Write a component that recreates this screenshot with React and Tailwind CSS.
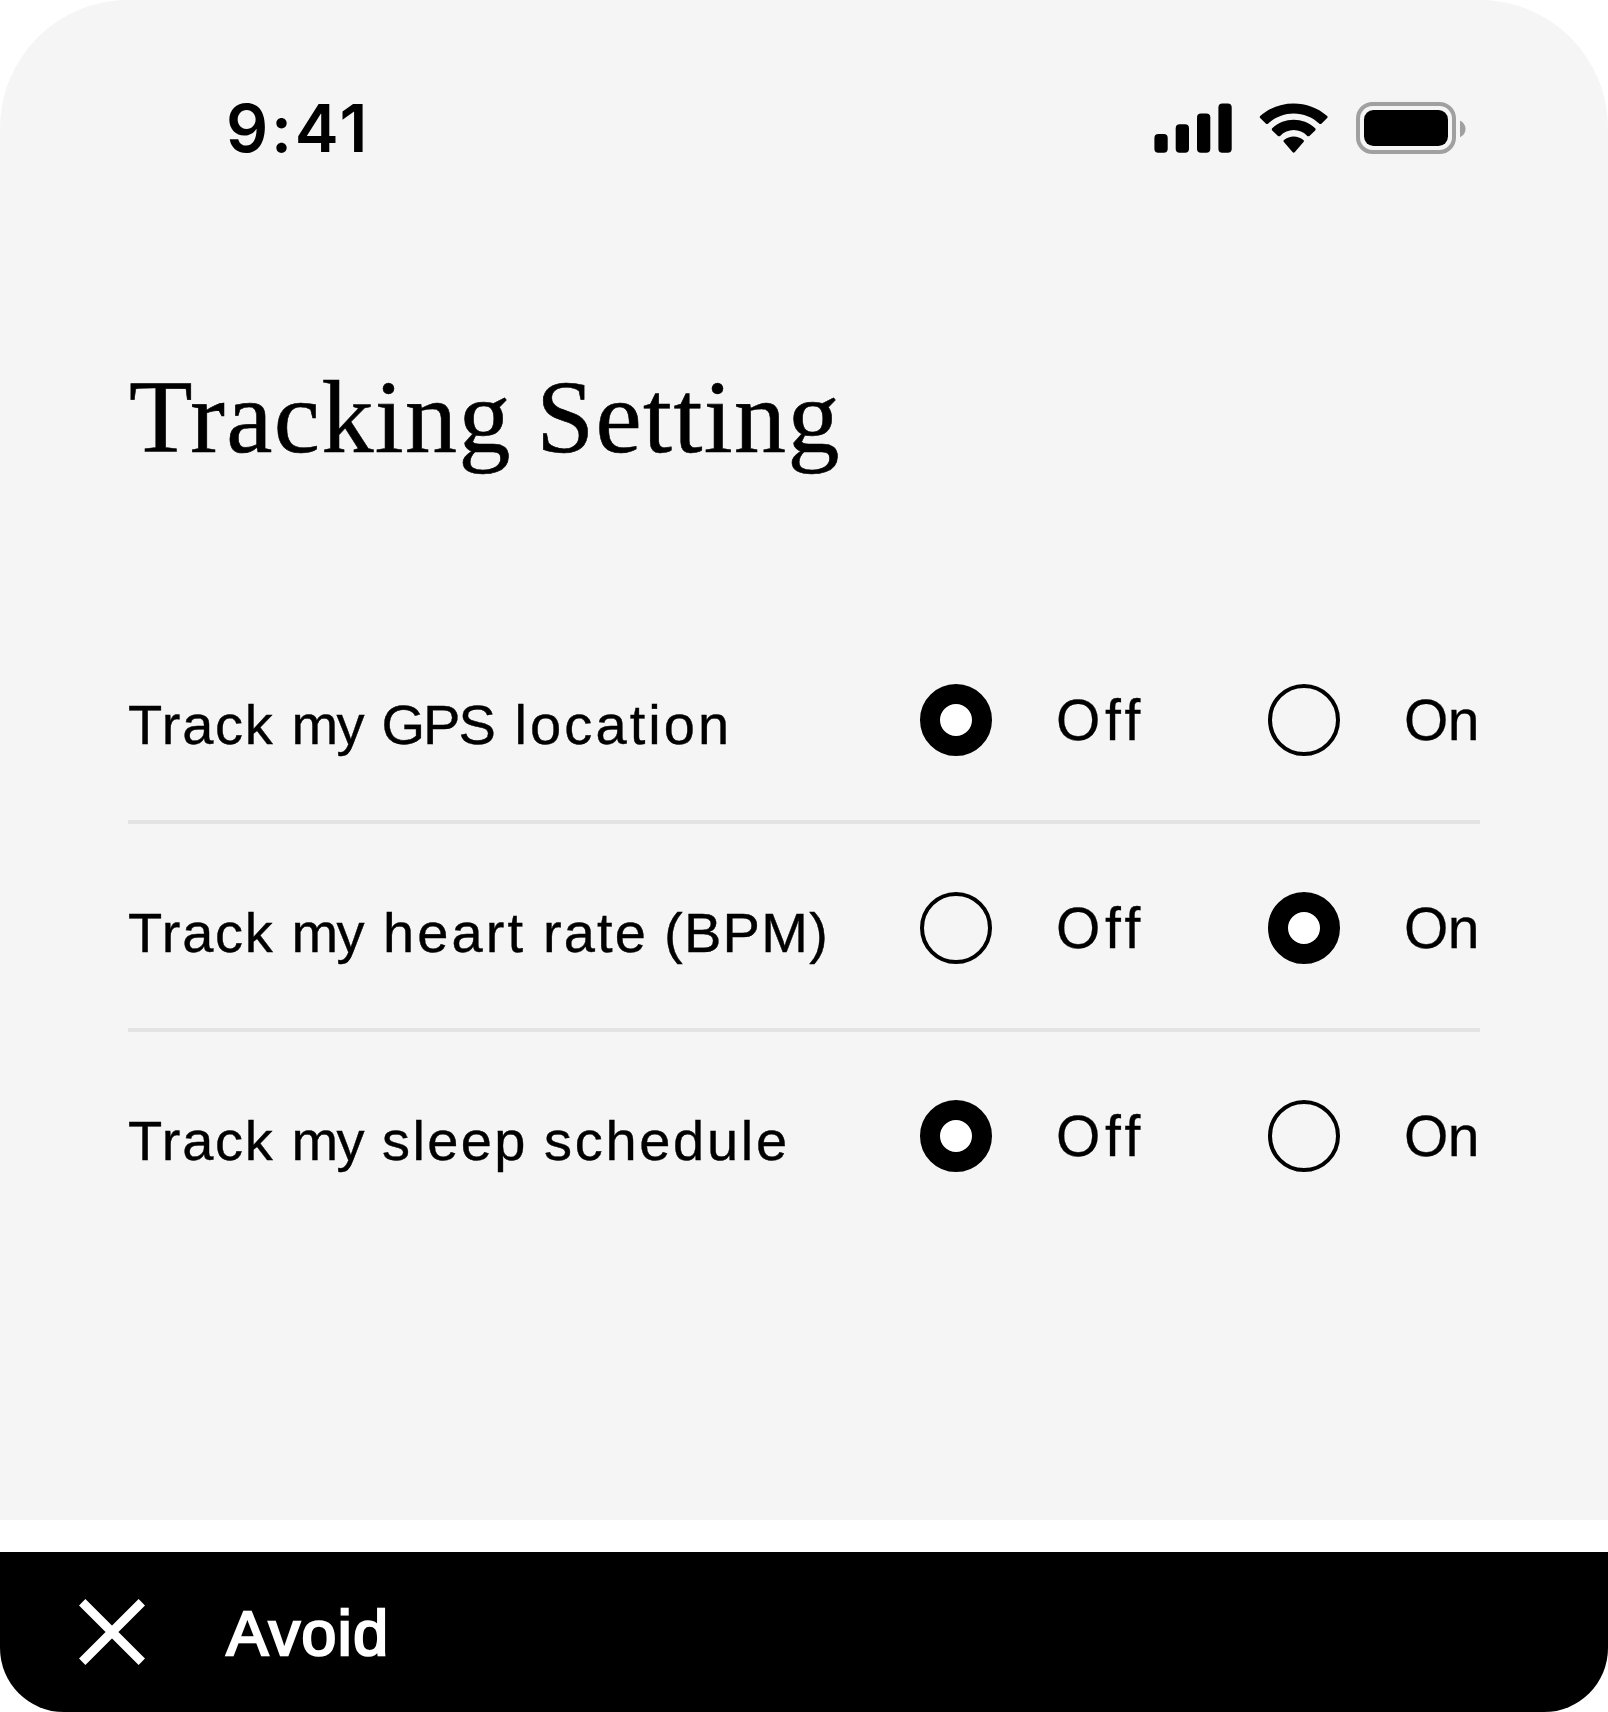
import React, { useState } from "react";

const initialSettings = [
  {
    id: "gps",
    words: [
      ["Track ", "w-[163.5px] tracking-[1.7px]"],
      ["my ", "w-[90px] tracking-[-1.6px]"],
      ["GPS ", "w-[133px] tracking-[-2px]"],
      ["location", "tracking-[3.1px]"],
    ],
    value: "Off",
  },
  {
    id: "heart",
    words: [
      ["Track ", "w-[163.5px] tracking-[1.7px]"],
      ["my ", "w-[91.5px] tracking-[-1.6px]"],
      ["heart ", "w-[160px] tracking-[3.1px]"],
      ["rate ", "w-[121px] tracking-[2.1px]"],
      ["(BPM)", "tracking-[1.3px]"],
    ],
    value: "On",
  },
  {
    id: "sleep",
    words: [
      ["Track ", "w-[163.5px] tracking-[1.7px]"],
      ["my ", "w-[90.5px] tracking-[-1.6px]"],
      ["sleep ", "w-[162px] tracking-[2.4px]"],
      ["schedule", "tracking-[2.7px]"],
    ],
    value: "Off",
  },
];

const options = [
  { label: "Off", className: "tracking-[4.7px]" },
  { label: "On", className: "tracking-[-0.5px]" },
];

function SignalIcon() {
  return (
    <svg width="78" height="50" viewBox="0 0 78 50" fill="black" aria-hidden="true">
      <rect x="0.4" y="31" width="13.3" height="18.8" rx="4" />
      <rect x="21.7" y="21.3" width="13.3" height="28.5" rx="4" />
      <rect x="43" y="10.5" width="13.3" height="39.3" rx="4" />
      <rect x="64.4" y="0.6" width="13.3" height="49.2" rx="4" />
    </svg>
  );
}

function WifiIcon() {
  return (
    <svg width="70" height="50" viewBox="0 0 70 50" fill="black" aria-hidden="true">
      <path d="M34.7 10.5C44.3 10.5 53.4 14.2 60.4 20.7C61 21.2 61.9 21.2 62.4 20.7L68.2 15.1C68.8 14.5 68.8 13.7 68.2 13.1C49.6 -3.7 19.8 -3.7 1.2 13.1C0.6 13.7 0.6 14.5 1.2 15.1L7 20.7C7.5 21.2 8.4 21.2 9 20.7C16 14.2 25.1 10.5 34.7 10.5Z" />
      <path d="M34.7 27C39.7 27 44.6 29.1 48.3 32.9C48.9 33.5 49.8 33.5 50.4 32.9L56.2 27.4C56.8 26.8 56.8 25.9 56.2 25.3C44 14 25.4 14 13.2 25.3C12.6 25.9 12.6 26.8 13.2 27.4L19 32.9C19.6 33.5 20.5 33.5 21.1 32.9C24.8 29.1 29.7 27 34.7 27Z" />
      <path d="M44.5 39.1C45.1 38.5 45.1 37.6 44.4 37C38.9 32.2 30.5 32.2 25 37C24.3 37.6 24.3 38.5 24.9 39.1L33.7 49.3C34.3 49.9 35.1 49.9 35.7 49.3Z" />
    </svg>
  );
}

function BatteryIcon() {
  return (
    <svg width="110" height="52" viewBox="0 0 110 52" aria-hidden="true">
      <rect x="2" y="2" width="96" height="48" rx="14.5" fill="none" stroke="#a0a0a0" strokeWidth="4" />
      <rect x="8" y="8" width="84" height="36" rx="9.5" fill="black" />
      <path d="M104 18.8V35.2C107.3 33.8 109.5 30.6 109.5 27C109.5 23.4 107.3 20.2 104 18.8Z" fill="#a0a0a0" />
    </svg>
  );
}

function CloseIcon() {
  return (
    <svg width="66" height="66" viewBox="0 0 66 66" stroke="white" strokeWidth="9" aria-hidden="true">
      <path d="M3.2 3.2L62.8 62.8M62.8 3.2L3.2 62.8" />
    </svg>
  );
}

function RadioOption({ name, option, checked, onSelect }) {
  return (
    <label className="flex h-[72px] cursor-pointer items-center gap-16">
      <input
        type="radio"
        name={name}
        checked={checked}
        onChange={onSelect}
        className="size-[72px] shrink-0 appearance-none rounded-full border-4 border-black checked:border-20 checked:bg-white"
      />
      <span className={`text-[57px] leading-[72px] [-webkit-text-stroke:0.3px_black] ${option.className}`}>
        {option.label}
      </span>
    </label>
  );
}

function SettingRow({ setting, onChange }) {
  return (
    <div className="grid h-52 grid-cols-[792px_348px_212px] items-start border-b-4 border-[#e3e3e3] pt-[68px] last:border-b-0">
      <span className="pt-[5px] text-[56px] leading-[72px] whitespace-pre [-webkit-text-stroke:0.4px_black]">
        {setting.words.map(([word, className]) => (
          <span key={word} className={`inline-block ${className}`}>
            {word}
          </span>
        ))}
      </span>
      {options.map((option) => (
        <RadioOption
          key={option.label}
          name={setting.id}
          option={option}
          checked={setting.value === option.label}
          onSelect={() => onChange(setting.id, option.label)}
        />
      ))}
    </div>
  );
}

export default function App() {
  const [settings, setSettings] = useState(initialSettings);
  const update = (id, value) =>
    setSettings((list) => list.map((s) => (s.id === id ? { ...s, value } : s)));

  return (
    <div className="flex h-[1712px] w-[1608px] flex-col gap-8 overflow-hidden bg-white font-['Liberation_Sans',sans-serif] text-black">
      <main className="h-[1520px] rounded-t-[128px] bg-[#f5f5f5]">
        <header className="flex h-64 items-start justify-between pt-[102px] pr-[142px] pl-[226px]">
          <span className="font-['Inter',sans-serif] text-[66px] leading-[52px] font-semibold tracking-[2.8px]">9:41</span>
          <div className="flex items-center gap-[27px]">
            <SignalIcon />
            <WifiIcon />
            <BatteryIcon />
          </div>
        </header>
        <section className="px-32">
          <h1 className="h-[360px] pt-[97px] pl-px font-['Liberation_Serif',serif] text-[104px] leading-[128px] tracking-[1.4px] [word-spacing:-3px] [-webkit-text-stroke:0.6px_black]">
            Tracking Setting
          </h1>
          <div>
            {settings.map((setting) => (
              <SettingRow key={setting.id} setting={setting} onChange={update} />
            ))}
          </div>
        </section>
      </main>
      <footer className="flex h-40 items-center gap-20 rounded-b-[64px] bg-black pl-[79px] text-white">
        <CloseIcon />
        <span className="pt-0.5 pl-[1.5px] text-[62.5px] leading-[72px] tracking-[1.6px] [-webkit-text-stroke:2.5px_white]">
          Avoid
        </span>
      </footer>
    </div>
  );
}
